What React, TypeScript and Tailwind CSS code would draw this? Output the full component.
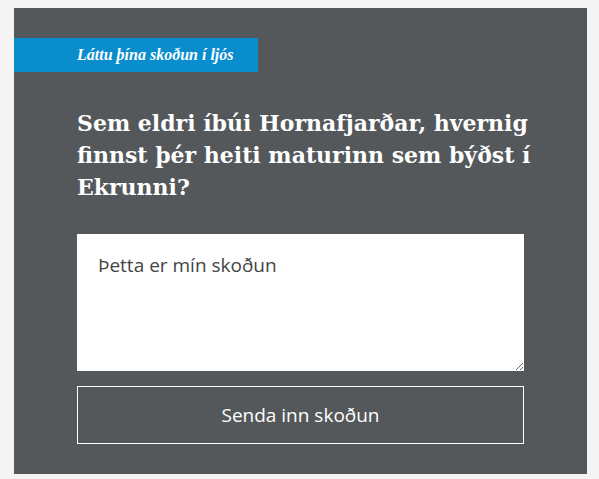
export default function App() {
  return (
    <div className="min-h-[479px] w-[599px] bg-[#f4f4f4] pl-[14px] pr-[12px] pt-[8px] pb-[6px]">
      <div className="bg-[#54585b] pt-[30px] pb-[30px]">
        <div className="flex h-[34px] w-[244px] items-center bg-[#0a8dcd] pl-[63px]">
          <span
            className="whitespace-nowrap text-[16px] font-bold italic text-white"
            style={{ fontFamily: '"Liberation Serif", serif' }}
          >
            Láttu þína skoðun í ljós
          </span>
        </div>

        <div className="px-[63px]">
          <h2
            className="-mr-[40px] mt-[35px] text-[22px] font-bold leading-[32px] text-white"
            style={{ fontFamily: '"DejaVu Serif", serif' }}
          >
            Sem eldri íbúi Hornafjarðar, hvernig
            <br />
            finnst þér heiti maturinn sem býðst í
            <br />
            Ekrunni?
          </h2>

          <textarea
            defaultValue="Þetta er mín skoðun"
            className="mt-[31px] block h-[137px] w-full bg-white px-[21px] py-[17px] text-[19px] leading-[28px] text-[#444] outline-none"
            style={{ fontFamily: '"Open Sans", sans-serif' }}
          />

          <button
            className="mt-[15px] flex h-[58px] w-full items-center justify-center border border-white text-[19px] text-white"
            style={{ fontFamily: '"Open Sans", sans-serif' }}
          >
            Senda inn skoðun
          </button>
        </div>
      </div>
    </div>
  )
}
